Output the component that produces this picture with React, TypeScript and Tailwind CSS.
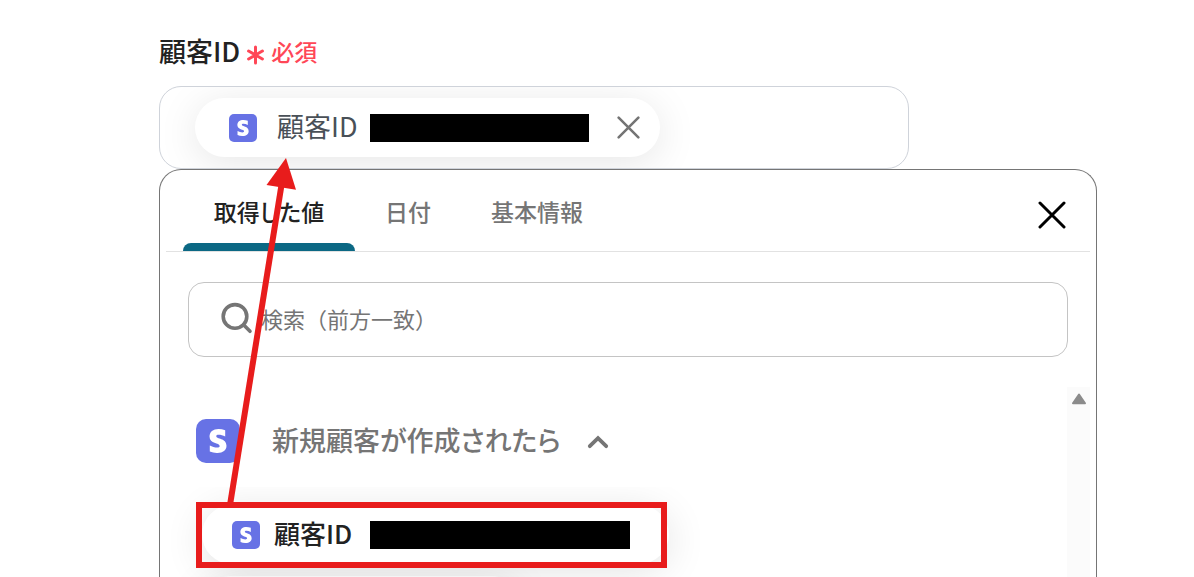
import React from "react";
import { FaStripeS } from "react-icons/fa";

function CrossIcon({ className, strokeWidth }: { className: string; strokeWidth: number }) {
  return (
    <svg viewBox="0 0 28 28" fill="none" stroke="currentColor" strokeWidth={strokeWidth} strokeLinecap="round" className={className} aria-hidden="true">
      <path d="M2 2 26 26M26 2 2 26" />
    </svg>
  );
}

function AppBadge({ large = false }: { large?: boolean }) {
  return large ? (
    <span className="flex size-11 shrink-0 items-center justify-center rounded-[10px] bg-[#6772e5] text-white">
      <FaStripeS className="size-6" aria-hidden="true" />
    </span>
  ) : (
    <span className="flex size-7 shrink-0 items-center justify-center rounded-[5px] bg-[#6772e5] text-white">
      <FaStripeS className="size-4" aria-hidden="true" />
    </span>
  );
}

const inactiveTabs = ["日付", "基本情報"];

export default function App() {
  return (
    <main className="relative flex h-screen flex-col overflow-hidden bg-white pr-[97px] pl-[159px] font-['Noto_Sans_CJK_JP',sans-serif] text-[#222]">
      <div className="flex h-[86px] shrink-0 items-center pt-4">
        <span id="customer-label" className="text-[27px] leading-10 font-medium">顧客ID</span>
        <span className="ml-1.5 flex items-center gap-1.5 text-[23px] leading-10 font-medium text-[#ff4757]">
          <svg viewBox="0 0 19 20" className="mt-2 h-5 w-[19px]" fill="none" stroke="currentColor" strokeWidth="3" strokeLinecap="round" aria-hidden="true">
            <path d="M9.5 2v16M2.6 6l13.8 8M16.4 6 2.6 14" />
          </svg>
          必須
        </span>
      </div>

      <div role="group" aria-labelledby="customer-label" className="flex h-[83px] w-4/5 shrink-0 items-center overflow-hidden rounded-[22px] border border-[#cfd3da] pl-[35px]">
        <div className="flex h-[59px] items-center rounded-full bg-white pr-[18px] pl-[34px] shadow-[0_6px_40px_rgba(0,0,0,0.1)]">
          <AppBadge />
          <span className="ml-5 pb-1 text-[27px] leading-10 text-[#495057]">顧客ID</span>
          <span className="ml-3 h-7 w-[219px] bg-black" />
          <button type="button" aria-label="削除" className="ml-[27px] flex size-[26px] items-center justify-center text-[#757575]">
            <CrossIcon className="size-[23px]" strokeWidth={3.1} />
          </button>
        </div>
      </div>

      <section className="flex min-h-0 flex-1 flex-col rounded-t-[22px] border border-b-0 border-[#757575] bg-white px-1.5">
        <div className="flex h-[82px] shrink-0 items-end justify-between border-b border-[#e2e2e2] pr-6 pl-[17px]">
          <div role="tablist" className="flex h-full text-[23px] leading-8 font-medium">
            <button type="button" role="tab" aria-selected="true" className="flex h-full w-[172px] flex-col items-center justify-between pt-[25px] font-medium whitespace-nowrap [font-feature-settings:'palt']">
              取得した値
              <span className="h-2 w-full rounded-t-lg bg-[#0b6884]" />
            </button>
            {inactiveTabs.map((tab) => (
              <button key={tab} type="button" role="tab" aria-selected="false" className="flex h-full items-start px-[30px] pt-[25px] font-medium text-[#757575]">
                {tab}
              </button>
            ))}
          </div>
          <button type="button" aria-label="閉じる" className="mb-[22px] text-black">
            <CrossIcon className="size-7" strokeWidth={3} />
          </button>
        </div>

        <label className="mx-[22px] mt-[30px] flex h-[75px] shrink-0 items-center rounded-2xl border border-[#c4c4c4] pl-8">
          <svg viewBox="0 0 32 32" className="mb-1 size-8 shrink-0 text-[#757575]" fill="none" stroke="currentColor" strokeWidth="3.6" strokeLinecap="round" aria-hidden="true">
            <circle cx="14" cy="14.4" r="11.8" />
            <path d="m22.5 22.8 6.5 6.5" />
          </svg>
          <input type="text" aria-label="検索" placeholder="検索（前方一致）" className="ml-2 min-w-0 flex-1 pb-1 text-[22px] leading-8 outline-none placeholder:text-[#757575]" />
        </label>

        <div className="mt-[30px] flex min-h-0 flex-1">
          <div className="min-w-0 flex-1 overflow-hidden pt-8">
            <button type="button" aria-expanded="true" className="ml-[30px] flex h-11 items-center">
              <AppBadge large />
              <span className="ml-8 pb-0.5 text-[27px] leading-10 font-medium text-[#757575] [font-feature-settings:'palt']">新規顧客が作成されたら</span>
              <svg viewBox="0 0 22 14" className="mt-0.5 ml-[26px] h-3.5 w-[22px] text-[#757575]" fill="none" stroke="currentColor" strokeWidth="3.8" strokeLinecap="round" aria-hidden="true">
                <path d="m2.8 11.2 8.2-8 8.2 8" />
              </svg>
            </button>
            <div className="mt-6 overflow-hidden pt-[18px] pr-10 pl-9">
              <div className="relative flex h-[59px] w-[467px] items-center rounded-full bg-white pl-[30px] shadow-[0_6px_40px_rgba(0,0,0,0.12)]">
                <AppBadge />
                <span className="ml-[14px] pb-1 text-[26px] leading-10 font-medium">顧客ID</span>
                <span className="ml-[18px] h-7 w-[260px] bg-black" />
                <span className="absolute -top-[3px] right-0.5 -bottom-1 -left-1.5 border-[6px] border-[#e81c1c]" />
              </div>
              <div className="mt-3 h-[59px] w-[319px] rounded-full bg-white shadow-[0_6px_40px_rgba(0,0,0,0.1)]" />
            </div>
          </div>
          <div className="flex w-[23px] shrink-0 justify-center bg-[#fbfbfb] pt-1.5" aria-hidden="true">
            <svg viewBox="0 0 16 12" className="h-3 w-4 text-[#8b8b8b]" fill="currentColor" stroke="currentColor" strokeWidth="2" strokeLinejoin="round">
              <path d="M8 1.6 14 10.2H2Z" />
            </svg>
          </div>
        </div>
      </section>

      <svg viewBox="0 0 100 350" className="pointer-events-none absolute top-[155px] left-[210px] h-[350px] w-[100px]" aria-hidden="true">
        <path d="M20 350 71.5 30" stroke="#e81c1c" strokeWidth="6" />
        <path d="M76 3 56.5 30 86 34.8Z" fill="#e81c1c" />
      </svg>
    </main>
  );
}
